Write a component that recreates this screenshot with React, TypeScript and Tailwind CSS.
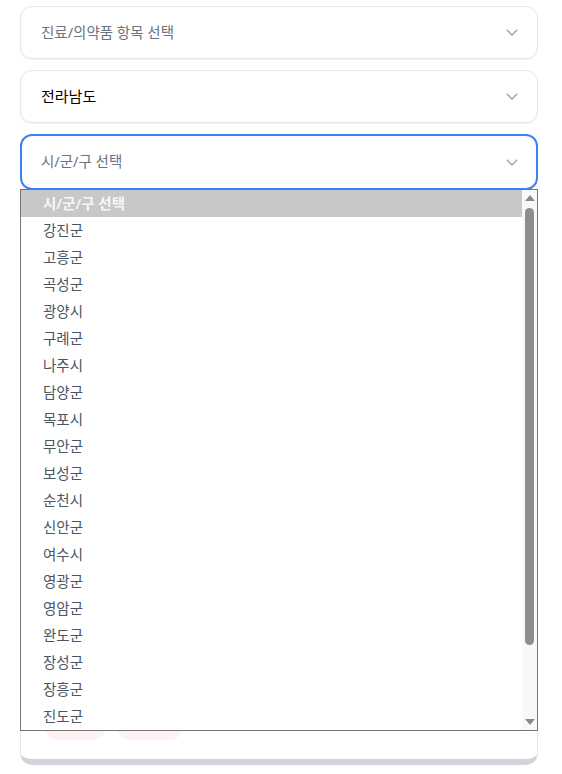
const districts = [
  "강진군",
  "고흥군",
  "곡성군",
  "광양시",
  "구례군",
  "나주시",
  "담양군",
  "목포시",
  "무안군",
  "보성군",
  "순천시",
  "신안군",
  "여수시",
  "영광군",
  "영암군",
  "완도군",
  "장성군",
  "장흥군",
  "진도군",
]

function Chevron() {
  return (
    <svg width="12" height="7" viewBox="0 0 12 7" fill="none" className="text-[#9ca3af]">
      <polyline points="0.75,0.75 6,6 11.25,0.75" stroke="currentColor" strokeWidth="1.3" />
    </svg>
  )
}

function SelectBox({ label, active, focused }: { label: string; active?: boolean; focused?: boolean }) {
  return (
    <div
      className={
        focused
          ? "h-[56px] rounded-xl border-2 border-[#3b82f6] bg-white flex items-center justify-between pl-[19px] pr-[18px]"
          : "h-[53px] rounded-xl border border-[#e5e7eb] bg-white shadow-[0_1px_2px_rgba(0,0,0,0.06)] flex items-center justify-between pl-5 pr-[19px]"
      }
    >
      <span className={active ? "text-[15px] font-normal text-black" : "text-[14.5px] text-[#6b7280]"}>{label}</span>
      <Chevron />
    </div>
  )
}

export default function App() {
  return (
    <div
      className="min-h-screen bg-white"
      style={{ fontFamily: '"Noto Sans", "Noto Sans CJK KR", sans-serif' }}
    >
      <div className="relative ml-5 w-[518px] pt-[6px] flex flex-col gap-[11px]">
        <SelectBox label="진료/의약품 항목 선택" />
        <SelectBox label="전라남도" active />
        <SelectBox label="시/군/구 선택" focused />

        {/* card underneath the open list */}
        <div className="h-[565px] -mt-[1px] rounded-b-xl border border-[#e5e7eb] border-b-[6px] border-b-[#d1d5db] bg-white flex flex-col justify-end pb-[19px] px-6">
          <div className="flex gap-[11px]">
            <div className="h-[28px] w-[61px] rounded-full bg-[#fef2f2]" />
            <div className="h-[28px] w-[66px] rounded-full bg-[#fef2f2]" />
          </div>
        </div>

        {/* native dropdown list */}
        <div className="absolute left-0 top-[189px] w-full h-[542px] border border-[#767676] bg-white flex">
          <div className="flex-1 flex flex-col">
            <div className="h-[27px] bg-[#c8c8c8] flex items-center pl-[22px] text-[14.5px] font-semibold text-[#f7f7f7]">
              시/군/구 선택
            </div>
            {districts.map((d) => (
              <div key={d} className="h-[27px] flex items-center pl-[22px] text-[14.5px] text-[#4b5563]">
                {d}
              </div>
            ))}
          </div>
          <div className="w-[15px] bg-[#f8f8f8] flex flex-col items-center">
            <div className="h-[16px] flex items-center justify-center">
              <div className="w-0 h-0 border-l-[5px] border-r-[5px] border-b-[6px] border-l-transparent border-r-transparent border-b-[#8a8a8a]" />
            </div>
            <div className="w-[9px] h-[437px] mt-[2px] rounded-full bg-[#8d8d8d]" />
            <div className="flex-1" />
            <div className="h-[16px] flex items-center justify-center">
              <div className="w-0 h-0 border-l-[5px] border-r-[5px] border-t-[6px] border-l-transparent border-r-transparent border-t-[#8a8a8a]" />
            </div>
          </div>
        </div>
      </div>
    </div>
  )
}
